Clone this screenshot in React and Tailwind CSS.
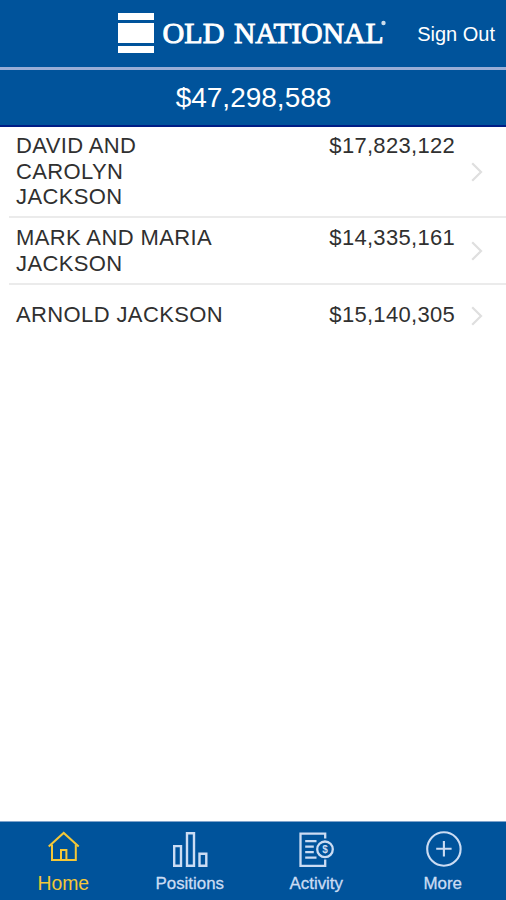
import clsx from "clsx";

const accounts = [
  {
    name: ["DAVID AND", "CAROLYN", "JACKSON"],
    value: "$17,823,122",
    className: "h-[91px] pt-[6px]",
  },
  {
    name: ["MARK AND MARIA", "JACKSON"],
    value: "$14,335,161",
    className: "h-[67px] pt-[7px]",
  },
  {
    name: ["ARNOLD JACKSON"],
    value: "$15,140,305",
    className: "h-[62px] pt-[17px]",
  },
];

const iconClass = "h-[38px] w-10 overflow-visible";

const HomeIcon = () => (
  <svg className={iconClass} viewBox="0 0 40 38" fill="none" stroke="currentColor" strokeWidth="2">
    <path d="M5.7 18.5 20.7 4.9 35.7 18.5" />
    <path d="M9 16.5V32H32.8V16.5" />
    <path d="M18 32V22H23.4V32" />
  </svg>
);

const PositionsIcon = () => (
  <svg className={iconClass} viewBox="0 0 40 38" fill="none" stroke="currentColor" strokeWidth="2.4">
    <path d="M4.2 18.1H11V37.7H4.2ZM17 5.3H24V37.7H17ZM29.5 25.8H36.3V37.7H29.5Z" />
  </svg>
);

const ActivityIcon = () => (
  <svg className={iconClass} viewBox="0 0 40 38" fill="none" stroke="currentColor" strokeWidth="2.3">
    <path d="M29.2 10.5V5.7H4.5V37.8H29.2V31.5" />
    <path d="M9.2 13.2H20.5M9.2 18.7H17.8M9.2 24.1H17.8M9.2 29.7H20.5" />
    <circle cx="29" cy="21.3" r="7.8" />
    <text
      x="29"
      y="25"
      textAnchor="middle"
      className="fill-current stroke-none font-['Liberation_Sans',sans-serif] text-[10px] font-bold"
    >
      $
    </text>
  </svg>
);

const MoreIcon = () => (
  <svg className={iconClass} viewBox="0 0 40 38" fill="none" stroke="currentColor" strokeWidth="2.1">
    <circle cx="20.9" cy="21" r="16.7" />
    <path d="M13.2 20.8H28.6M20.9 13V28.6" />
  </svg>
);

const tabs = [
  { label: "Home", icon: HomeIcon, active: true },
  { label: "Positions", icon: PositionsIcon },
  { label: "Activity", icon: ActivityIcon },
  { label: "More", icon: MoreIcon },
];

const Chevron = () => (
  <svg
    className="h-5 w-3 shrink-0"
    viewBox="0 0 12 20"
    fill="none"
    stroke="#dfdfdf"
    strokeWidth="2.2"
  >
    <path d="M1.2 1.2 10 10 1.2 18.8" />
  </svg>
);

function Logo() {
  return (
    <div className="flex items-start">
      {/* Three-bar mark */}
      <div className="mt-[13px] flex w-[35.5px] flex-col gap-[3px]">
        <div className="h-[7px] bg-white" />
        <div className="h-5 bg-white" />
        <div className="h-[7px] bg-white" />
      </div>
      <svg className="ml-[8px] mt-[13px] h-10 w-[230px]" viewBox="0 0 230 40">
        <g
          strokeWidth="0.9"
          className="fill-white stroke-white font-['Liberation_Serif',serif] text-[29px]"
        >
          <text x="0.5" y="30" textLength="62" lengthAdjust="spacingAndGlyphs">
            OLD
          </text>
          <text x="72" y="30" textLength="149.5" lengthAdjust="spacingAndGlyphs">
            NATIONAL
          </text>
        </g>
        <circle cx="221.5" cy="10" r="2.2" className="fill-white/80" />
      </svg>
    </div>
  );
}

export default function App() {
  return (
    <div className="flex h-screen w-full flex-col overflow-hidden bg-white font-['Liberation_Sans',Arial,sans-serif]">
      {/* Header */}
      <header className="flex h-[67px] shrink-0 items-start justify-between bg-[#00539b] pl-[118px] pr-[11px]">
        <Logo />
        <button className="mt-[22px] whitespace-nowrap text-[20px] leading-6 text-white">
          Sign Out
        </button>
      </header>

      {/* Total */}
      <div className="flex h-[60px] shrink-0 items-center justify-center border-b-2 border-t-[3px] border-b-[#001d86] border-t-[#98add6] bg-[#00539b] pl-px text-[28px] leading-none text-white">
        $47,298,588
      </div>

      {/* Accounts */}
      <main className="grow pl-[9px]">
        {accounts.map((account, i) => (
          <div
            key={account.value}
            className={clsx(
              "flex items-start pl-[7px] pr-[23px] text-[22px] leading-[25.5px] tracking-[0.3px] text-[#303030]",
              account.className,
              i < accounts.length - 1 && "border-b-2 border-[#ebebeb]"
            )}
          >
            <div className="grow tracking-[0.38px]">
              {account.name.map((line) => (
                <div key={line}>{line}</div>
              ))}
            </div>
            <div>{account.value}</div>
            <div
              className={clsx(
                "ml-4 flex",
                i === 0 && "mt-[29px]",
                i === 1 && "mt-[16px]",
                i === 2 && "mt-[4px]"
              )}
            >
              <Chevron />
            </div>
          </div>
        ))}
      </main>

      {/* Tab bar */}
      <nav className="grid h-[79px] shrink-0 grid-cols-4 border-t border-[#7fa3cc] bg-[#00539b]">
        {tabs.map(({ label, icon: Icon, active }) => (
          <button
            key={label}
            className={clsx(
              "flex flex-col items-center pt-[6px]",
              active ? "text-[#f4c738]" : "text-[#cbdcf3]"
            )}
          >
            <Icon />
            <span
              className={clsx(
                "leading-6",
                active
                  ? "mt-[5px] text-[19.4px]"
                  : "mt-[6px] text-[16.9px] [-webkit-text-stroke:0.3px]"
              )}
            >
              {label}
            </span>
          </button>
        ))}
      </nav>
    </div>
  );
}
